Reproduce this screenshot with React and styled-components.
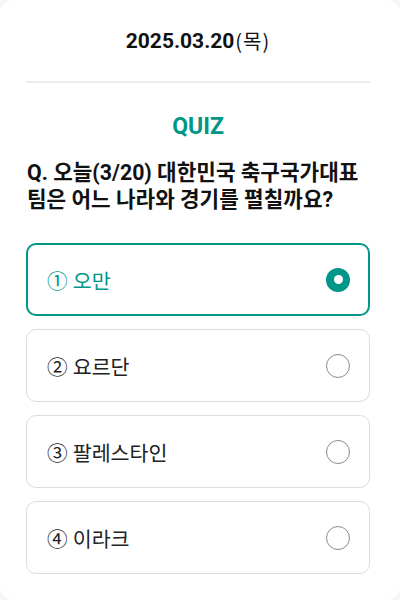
import React, { useState } from "react";
import styled, { createGlobalStyle } from "styled-components";

const Global = createGlobalStyle`
  html, body { margin: 0; padding: 0; background: #f7f7f7; }
  body { font-family: Roboto, "Noto Sans CJK KR", sans-serif; }
  * { box-sizing: border-box; }
`;

const Card = styled.div`
  width: 400px;
  min-height: 600px;
  background: #fff;
  border-radius: 14px;
  padding: 0 30px 24px 26px;
  display: flex;
  flex-direction: column;
`;

const DateRow = styled.div`
  height: 83px;
  display: flex;
  align-items: center;
  justify-content: center;
  border-bottom: 2px solid #ececec;
  color: #111;
`;

const DateNum = styled.span`
  font-size: 21px;
  font-weight: 700;
`;

const Weekday = styled.span`
  font-family: "Noto Sans CJK KR", sans-serif;
  font-size: 20px;
  font-weight: 400;
  letter-spacing: 1px;
  margin-left: 1px;
`;

const Title = styled.div`
  margin-top: 30px;
  text-align: center;
  color: #009688;
  font-weight: 700;
  font-size: 23px;
  line-height: 28px;
`;

const Question = styled.div`
  margin-top: 18px;
  padding-left: 1px;
  font-size: 21.3px;
  font-weight: 700;
  line-height: 27px;
  color: #111;
`;

const List = styled.div`
  margin-top: 30px;
  display: flex;
  flex-direction: column;
  gap: 13px;
`;

const Option = styled.div`
  height: 73px;
  border-radius: 10px;
  border: ${(p) => (p.$active ? "2px solid #009688" : "1px solid #dcdcdc")};
  padding: 0 ${(p) => (p.$active ? "18px" : "19px")} 0 ${(p) => (p.$active ? "19px" : "20px")};
  display: flex;
  align-items: center;
  justify-content: space-between;
  cursor: pointer;
`;

const Label = styled.span`
  font-size: 20.6px;
  color: ${(p) => (p.$active ? "#009688" : "#222")};
  font-weight: 400;
`;

const Radio = styled.span`
  width: 24px;
  height: 24px;
  border-radius: 50%;
  display: flex;
  align-items: center;
  justify-content: center;
  border: ${(p) => (p.$active ? "none" : "1px solid #8a8a8a")};
  background: ${(p) => (p.$active ? "#009688" : "#fff")};
  &::after {
    content: "";
    display: ${(p) => (p.$active ? "block" : "none")};
    width: 9px;
    height: 9px;
    border-radius: 50%;
    background: #fff;
  }
`;

const options = ["① 오만", "② 요르단", "③ 팔레스타인", "④ 이라크"];

export default function App() {
  const [sel, setSel] = useState(0);
  return (
    <>
      <Global />
      <Card>
        <DateRow>
          <DateNum>2025.03.20</DateNum>
          <Weekday>(목)</Weekday>
        </DateRow>
        <Title>QUIZ</Title>
        <Question>
          Q. 오늘(3/20) 대한민국 축구국가대표
          <br />
          팀은 어느 나라와 경기를 펼칠까요?
        </Question>
        <List>
          {options.map((o, i) => (
            <Option key={o} $active={sel === i} onClick={() => setSel(i)}>
              <Label $active={sel === i}>{o}</Label>
              <Radio $active={sel === i} />
            </Option>
          ))}
        </List>
      </Card>
    </>
  );
}
